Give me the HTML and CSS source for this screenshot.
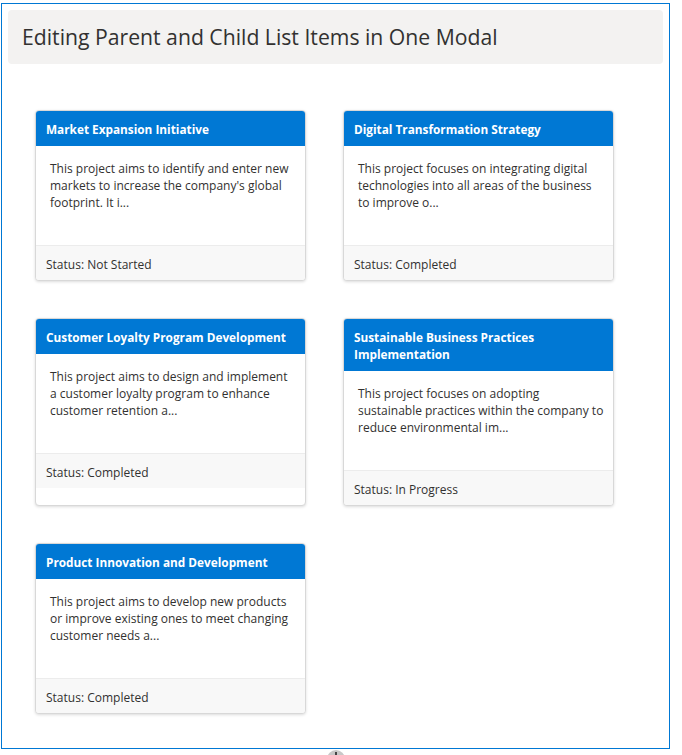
FILE: index.html
```html
<!DOCTYPE html>
<html lang="en">
<head>
<meta charset="utf-8">
<title>Editing Parent and Child List Items in One Modal</title>
<link rel="stylesheet" href="styles.css">
</head>
<body>
<div class="frame">
  <header class="page-header">
    <h1 class="page-title">Editing Parent and Child List Items in One Modal</h1>
  </header>
  <div class="card-grid">
    <div class="card">
      <div class="card-header">Market Expansion Initiative</div>
      <div class="card-body">This project aims to identify and enter new markets to increase the company's global footprint. It i...</div>
      <div class="card-footer">Status: Not Started</div>
    </div>
    <div class="card">
      <div class="card-header">Digital Transformation Strategy</div>
      <div class="card-body">This project focuses on integrating digital technologies into all areas of the business to improve o...</div>
      <div class="card-footer">Status: Completed</div>
    </div>
    <div class="card">
      <div class="card-header">Customer Loyalty Program Development</div>
      <div class="card-body">This project aims to design and implement a customer loyalty program to enhance customer retention a...</div>
      <div class="card-footer">Status: Completed</div>
    </div>
    <div class="card">
      <div class="card-header">Sustainable Business Practices Implementation</div>
      <div class="card-body">This project focuses on adopting sustainable practices within the company to reduce environmental im...</div>
      <div class="card-footer">Status: In Progress</div>
    </div>
    <div class="card">
      <div class="card-header">Product Innovation and Development</div>
      <div class="card-body">This project aims to develop new products or improve existing ones to meet changing customer needs a...</div>
      <div class="card-footer">Status: Completed</div>
    </div>
  </div>
</div>
<div class="scroll-handle"><span class="scroll-dot"></span></div>
</body>
</html>
```
FILE: styles.css
```css
html, body {
  margin: 0;
  padding: 0;
  background: #ffffff;
}
body {
  font-family: "Open Sans", "Noto Sans", sans-serif;
  color: #323130;
  position: relative;
  height: 755px;
  overflow: hidden;
}
.frame {
  box-sizing: border-box;
  width: 669px;
  height: 746px;
  margin: 3px 0 0 1px;
  border: 1px solid #0078d4;
  padding: 6px;
}
.page-header {
  height: 54px;
  background: #f3f2f1;
  border-radius: 4px;
  padding: 0 14px;
  display: flex;
  align-items: center;
}
.page-title {
  margin: 0;
  font-size: 21.2px;
  font-weight: 400;
  line-height: 28px;
  color: #323130;
}
.card-grid {
  display: grid;
  grid-template-columns: 271px 271px;
  column-gap: 37px;
  row-gap: 37px;
  margin: 46px 0 0 27px;
}
.card {
  background: #ffffff;
  border: 1px solid #d8d8d8;
  border-radius: 4px;
  box-shadow: 0 1px 3px rgba(0, 0, 0, 0.14);
  overflow: hidden;
}
.card-header {
  background: #0078d4;
  color: #ffffff;
  font-weight: 700;
  font-size: 11.8px;
  line-height: 17px;
  padding: 10px 10px 8px;
}
.card-body {
  box-sizing: border-box;
  height: 99px;
  padding: 14px 9px 0 14px;
  font-size: 12px;
  line-height: 17px;
  color: #323130;
}
.card-footer {
  box-sizing: border-box;
  height: 35px;
  border-top: 1px solid #ececec;
  background: #f8f8f8;
  padding: 2px 10px 0;
  display: flex;
  align-items: center;
  font-size: 12px;
  color: #323130;
}
.scroll-handle {
  position: absolute;
  left: 327px;
  top: 750px;
  width: 18px;
  height: 18px;
  border-radius: 50%;
  background: #c8c8c8;
}
.scroll-dot {
  position: absolute;
  left: 8px;
  top: 2px;
  width: 2px;
  height: 3px;
  background: #444444;
}
```
